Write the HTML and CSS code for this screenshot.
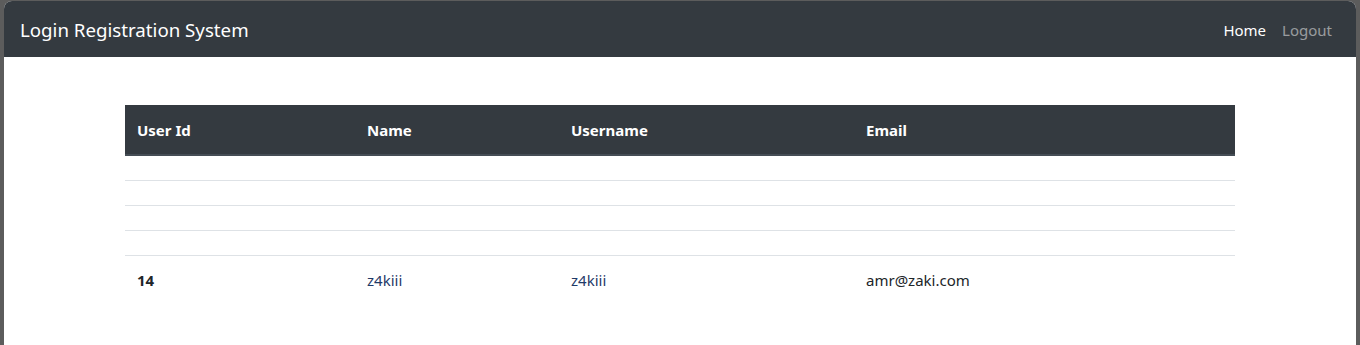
FILE: index.html
```html
<!DOCTYPE html>
<html lang="en">
<head>
  <meta charset="UTF-8">
  <meta name="viewport" content="width=device-width, initial-scale=1.0">
  <title>Login Registration System</title>
  <link rel="stylesheet" href="styles.css">
</head>
<body>
  <div class="window">
    <nav class="navbar">
      <a class="brand" href="#">Login Registration System</a>
      <ul class="nav-links">
        <li><a class="active" href="#">Home</a></li>
        <li><a href="#">Logout</a></li>
      </ul>
    </nav>

    <div class="container">
      <table class="users-table">
        <thead>
          <tr>
            <th class="col-id">User Id</th>
            <th class="col-name">Name</th>
            <th class="col-username">Username</th>
            <th class="col-email">Email</th>
          </tr>
        </thead>
        <tbody>
          <tr><th></th><td></td><td></td><td></td></tr>
          <tr><th></th><td></td><td></td><td></td></tr>
          <tr><th></th><td></td><td></td><td></td></tr>
          <tr><th></th><td></td><td></td><td></td></tr>
          <tr>
            <th scope="row">14</th>
            <td class="name">z4kiii</td>
            <td class="name">z4kiii</td>
            <td>amr@zaki.com</td>
          </tr>
        </tbody>
      </table>
    </div>
  </div>
</body>
</html>
```

FILE: styles.css
```css
html, body {
  height: 100%;
}
body {
  margin: 0;
  background: #5c5c5c;
  font-family: 'Noto Sans', 'Open Sans', Arial, sans-serif;
  font-size: 15px;
  line-height: 24px;
  color: #212529;
  overflow: hidden;
}
.window {
  margin: 1px 4px 0 4px;
  min-height: 100%;
  background: #fff;
  border-radius: 8px 8px 0 0;
  overflow: hidden;
}
.navbar {
  display: flex;
  align-items: center;
  justify-content: space-between;
  height: 56px;
  padding: 2px 16px 0;
  box-sizing: border-box;
  background: #343a40;
}
.brand {
  color: #fff;
  font-size: 18.7px;
  line-height: 30px;
  text-decoration: none;
}
.nav-links {
  display: flex;
  list-style: none;
  margin: 0;
  padding: 0;
}
.nav-links a {
  display: block;
  padding: 8px;
  color: rgba(255, 255, 255, 0.5);
  text-decoration: none;
}
.nav-links a.active {
  color: #fff;
}
.container {
  max-width: 1110px;
  margin: 48px auto 0;
  padding: 0 15px;
}
.users-table {
  width: 100%;
  border-collapse: collapse;
}
.users-table th,
.users-table td {
  padding: 12px;
  text-align: left;
  vertical-align: top;
  border-top: 1px solid #dee2e6;
  height: 0;
}
.users-table tbody th,
.users-table tbody td {
  line-height: 0;
}
.users-table tbody tr:last-child th,
.users-table tbody tr:last-child td {
  line-height: 24px;
}
.users-table thead th {
  padding-top: 13px;
  background: #343a40;
  color: #fff;
  border-top: none;
  border-bottom: 2px solid #454d55;
  font-weight: 700;
}
.users-table tbody th {
  font-weight: 700;
}
.col-id { width: 206px; }
.col-name { width: 180px; }
.col-username { width: 271px; }
.name {
  color: #1f3a68;
}
```
